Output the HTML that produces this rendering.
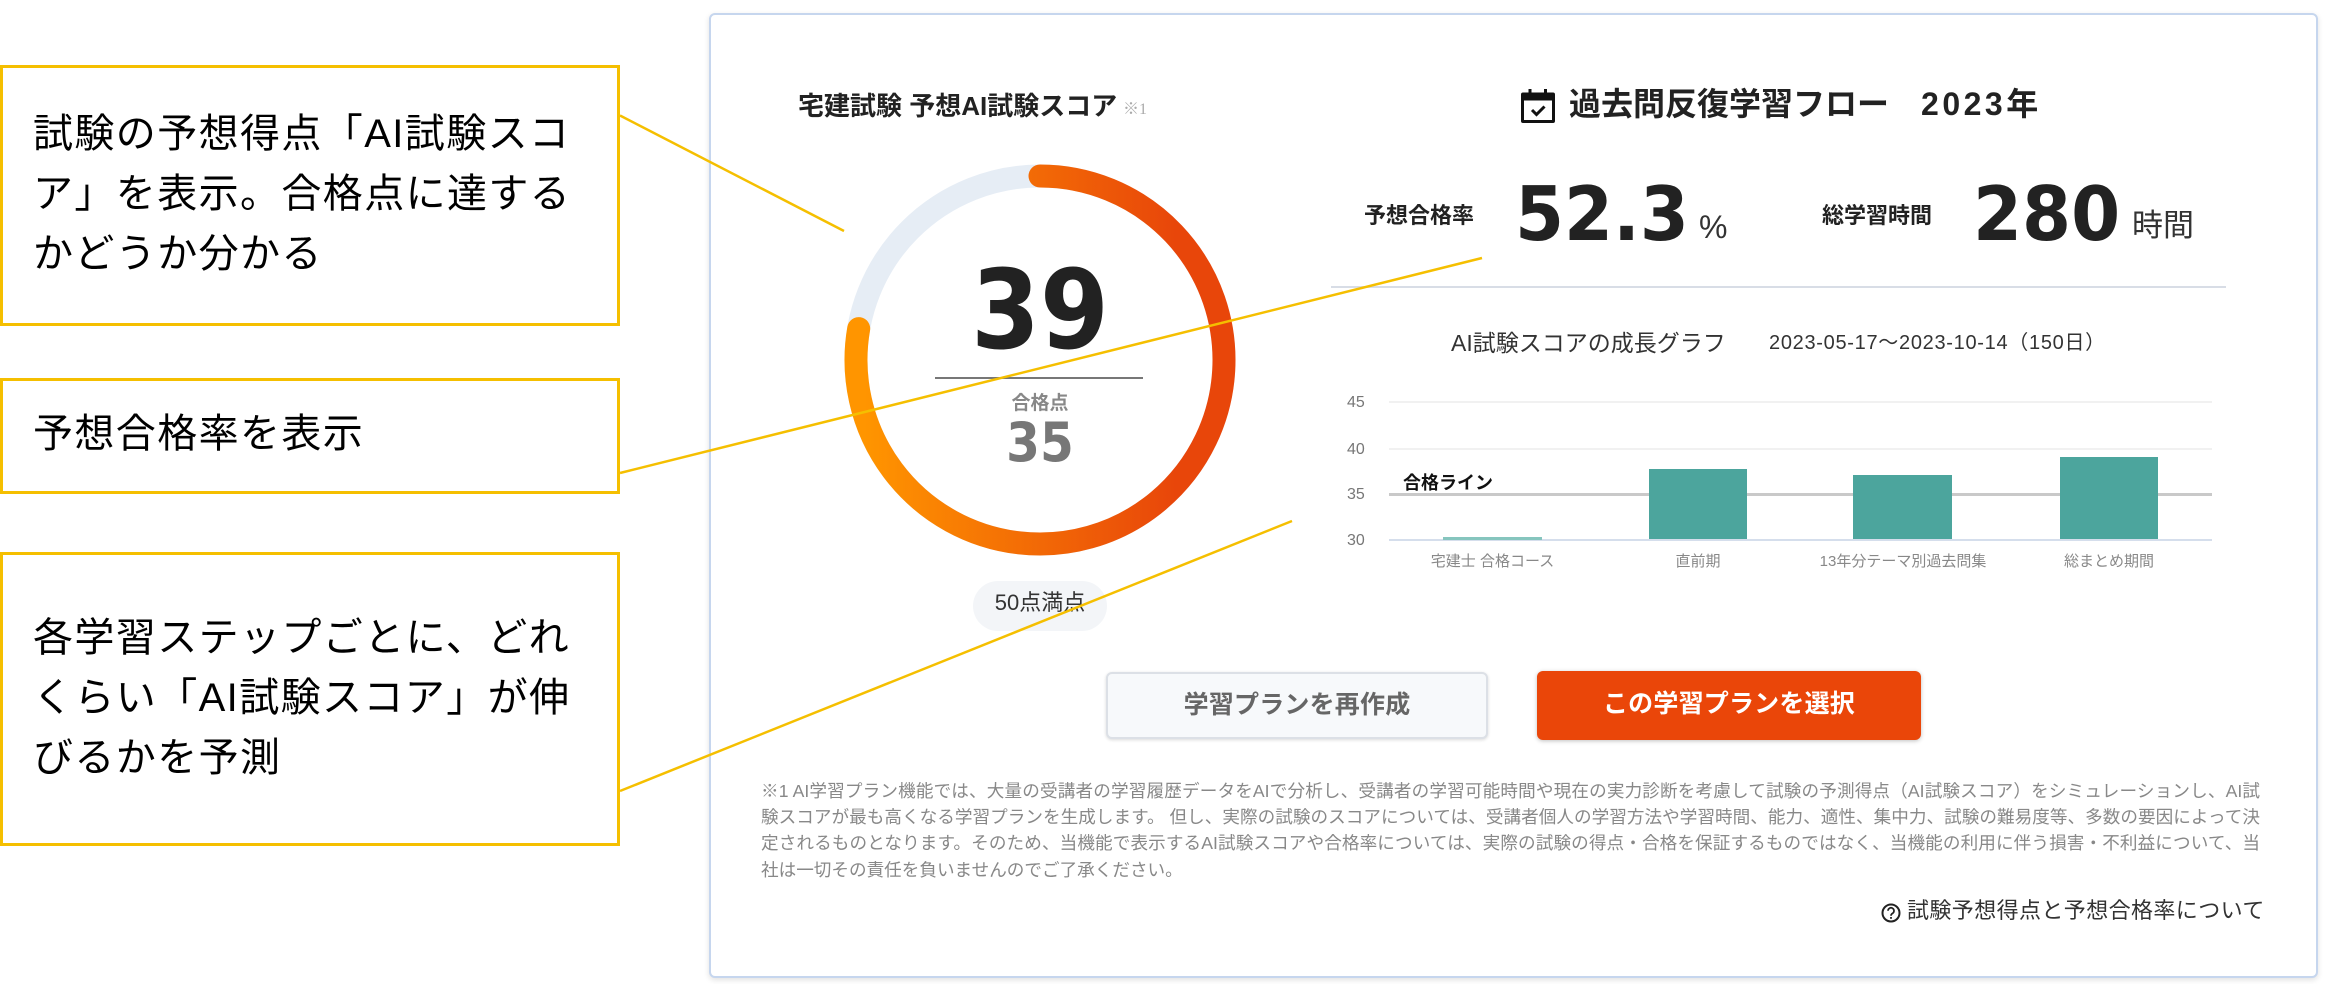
<!DOCTYPE html>
<html lang="ja">
<head>
<meta charset="utf-8">
<title>AI試験スコア</title>
<style>
html,body{margin:0;padding:0;background:#fff;width:2328px;height:984px;overflow:hidden}
body{position:relative;font-family:"Liberation Sans","Noto Sans CJK JP",sans-serif;color:#222}
.t{position:absolute;white-space:nowrap}
.c{text-align:center}
.box{position:absolute;left:0;width:614px;border:3px solid #F5BF00;background:#fff;box-sizing:content-box}
.cal{font-size:40px;color:#000;line-height:60px;left:33px;letter-spacing:1.4px}
.card{position:absolute;left:709px;top:13px;width:1605px;height:961px;border:2px solid #C6D6EE;border-radius:6px;background:#fff;box-shadow:0 2px 6px rgba(0,0,0,.12)}
.num{font-family:"DejaVu Sans",sans-serif;font-weight:700;color:#222;transform-origin:left top}
.b{font-weight:700}
.grid{position:absolute;left:1389px;width:823px;height:2px;background:#F1F1F1}
.bar{position:absolute;background:#4CA59D}
.xl{font-size:15px;color:#888;line-height:20px;top:552px}
.yl{font-size:16px;color:#777;line-height:20px;left:1347px}
.fn{position:absolute;left:761px;width:1499px;font-size:17.6px;line-height:26px;color:#888;text-align:justify;text-align-last:justify;white-space:nowrap}
.btn{position:absolute;box-sizing:border-box;border-radius:6px;text-align:center;font-size:25px;font-weight:700;letter-spacing:.2px}
</style>
</head>
<body>

<div class="card"></div>

<!-- Callout boxes -->
<div class="box" style="top:65px;height:255px"></div>
<div class="t cal" style="top:104px">試験の予想得点「AI試験スコ</div>
<div class="t cal" style="top:164px">ア」を表示。合格点に達する</div>
<div class="t cal" style="top:224px">かどうか分かる</div>

<div class="box" style="top:378px;height:110px"></div>
<div class="t cal" style="top:404px">予想合格率を表示</div>

<div class="box" style="top:552px;height:288px"></div>
<div class="t cal" style="top:608px">各学習ステップごとに、どれ</div>
<div class="t cal" style="top:668px">くらい「AI試験スコア」が伸</div>
<div class="t cal" style="top:728px">びるかを予測</div>

<!-- Score title -->
<div class="t b" style="left:798px;top:88px;font-size:26px;line-height:36px;color:#222">宅建試験 予想AI試験スコア</div>
<div class="t" style="left:1123px;top:100px;font-size:16px;line-height:20px;color:#aaa;font-family:'Liberation Serif','Noto Serif CJK SC',serif">※1</div>

<!-- Donut -->
<svg style="position:absolute;left:0;top:0" width="2328" height="984" viewBox="0 0 2328 984">
  <defs>
    <linearGradient id="g" gradientUnits="userSpaceOnUse" x1="845" y1="0" x2="1235" y2="0">
      <stop offset="0.05" stop-color="#FF9500"/>
      <stop offset="0.85" stop-color="#E8460A"/>
    </linearGradient>
  </defs>
  <circle cx="1040" cy="360" r="184" fill="none" stroke="#E6EDF5" stroke-width="23"/>
  <path d="M1040 176 A184 184 0 1 1 858.7 328.6 " fill="none" stroke="url(#g)" stroke-width="23" stroke-linecap="round"/>
  <rect x="935" y="377" width="208" height="2" fill="#777"/>
</svg>

<div class="t num c" style="left:940px;width:200px;top:245px;font-size:110px;line-height:130px;transform:scaleX(.9);transform-origin:center top">39</div>
<div class="t c b" style="left:990px;width:100px;top:392px;font-size:19px;line-height:24px;color:#888">合格点</div>
<div class="t c" style="left:990px;width:100px;top:411px;font-size:54px;line-height:64px;color:#777;font-family:'DejaVu Sans',sans-serif;font-weight:700;transform:scaleX(.9)">35</div>

<div style="position:absolute;left:973px;top:581px;width:134px;height:50px;border-radius:25px;background:#F3F5F8"></div>
<div class="t c" style="left:973px;width:134px;top:587px;font-size:22px;line-height:32px;color:#333">50点満点</div>

<!-- Right title -->
<svg style="position:absolute;left:1521px;top:89px" width="34" height="34" viewBox="0 0 34 34">
  <rect x="7.5" y="0" width="3" height="6" fill="#111"/>
  <rect x="23" y="0" width="3" height="6" fill="#111"/>
  <path d="M2 3.500H32a2 2 0 0 1 2 2V32a2 2 0 0 1-2 2H2a2 2 0 0 1-2-2V5.500a2 2 0 0 1 2-2Z" fill="#111"/>
  <rect x="3" y="11.500" width="28" height="19.500" fill="#fff"/>
  <path d="M11 21l4.500 4.500L23.500 17.500" fill="none" stroke="#111" stroke-width="3"/>
</svg>
<div class="t b" style="left:1569px;top:80px;font-size:32px;line-height:48px;color:#222">過去問反復学習フロー　<span style="letter-spacing:3.5px">2023年</span></div>

<!-- Stats -->
<div class="t b" style="left:1364px;top:200px;font-size:22px;line-height:32px;color:#222">予想合格率</div>
<div class="t num" style="left:1515px;top:169px;font-size:75px;line-height:90px;transform:scaleX(.94)">52.3</div>
<div class="t" style="left:1699px;top:207px;font-size:32px;line-height:40px;color:#333">%</div>
<div class="t b" style="left:1822px;top:200px;font-size:22px;line-height:32px;color:#222">総学習時間</div>
<div class="t num" style="left:1973px;top:169px;font-size:75px;line-height:90px;transform:scaleX(.94)">280</div>
<div class="t" style="left:2132px;top:206px;font-size:31px;line-height:40px;color:#333">時間</div>
<div style="position:absolute;left:1331px;top:286px;width:895px;height:2px;background:#D8DDE6"></div>

<!-- Graph -->
<div class="t" style="left:1451px;top:325px;font-size:23px;line-height:36px;color:#333">AI試験スコアの成長グラフ</div>
<div class="t" style="left:1769px;top:328px;font-size:20px;line-height:30px;color:#333;letter-spacing:.7px">2023-05-17～2023-10-14（150日）</div>

<div class="yl t" style="top:393px">45</div>
<div class="yl t" style="top:440px">40</div>
<div class="yl t" style="top:485px">35</div>
<div class="yl t" style="top:531px">30</div>

<div class="grid" style="top:401px"></div>
<div class="grid" style="top:448px"></div>
<div class="grid" style="top:493px;height:3px;background:#C9C9C9"></div>
<div class="grid" style="top:539px;background:#D5DEEC"></div>

<div class="bar" style="left:1443px;top:537px;width:99px;height:3px;background:#86C5BE"></div>
<div class="bar" style="left:1649px;top:469px;width:98px;height:70px"></div>
<div class="bar" style="left:1853px;top:475px;width:99px;height:64px"></div>
<div class="bar" style="left:2060px;top:457px;width:98px;height:82px"></div>

<div class="t b" style="left:1403px;top:469px;font-size:18px;line-height:28px;color:#111">合格ライン</div>

<div class="t xl c" style="left:1400px;width:185px">宅建士 合格コース</div>
<div class="t xl c" style="left:1605px;width:186px">直前期</div>
<div class="t xl c" style="left:1810px;width:186px">13年分テーマ別過去問集</div>
<div class="t xl c" style="left:2016px;width:186px">総まとめ期間</div>

<!-- Buttons -->
<div class="btn" style="left:1106px;top:672px;width:382px;height:67px;background:#F7F9FB;border:2px solid #DCE0E6;color:#666;line-height:62px;box-shadow:0 1px 3px rgba(0,0,0,.15)">学習プランを再作成</div>
<div class="btn" style="left:1537px;top:671px;width:384px;height:69px;background:#EA4609;color:#fff;line-height:67px;box-shadow:0 1px 4px rgba(0,0,0,.25)">この学習プランを選択</div>

<!-- Footnote -->
<div class="fn" style="top:778px">※1 AI学習プラン機能では、大量の受講者の学習履歴データをAIで分析し、受講者の学習可能時間や現在の実力診断を考慮して試験の予測得点（AI試験スコア）をシミュレーションし、AI試</div>
<div class="fn" style="top:804px">験スコアが最も高くなる学習プランを生成します。 但し、実際の試験のスコアについては、受講者個人の学習方法や学習時間、能力、適性、集中力、試験の難易度等、多数の要因によって決</div>
<div class="fn" style="top:830px">定されるものとなります。そのため、当機能で表示するAI試験スコアや合格率については、実際の試験の得点・合格を保証するものではなく、当機能の利用に伴う損害・不利益について、当</div>
<div class="fn" style="top:857px;text-align-last:left">社は一切その責任を負いませんのでご了承ください。</div>

<!-- Help link -->
<svg style="position:absolute;left:1881px;top:903px" width="20" height="20" viewBox="0 0 20 20">
  <circle cx="10" cy="10" r="8.500" fill="none" stroke="#222" stroke-width="2"/>
  <path d="M7 7.800a3 3 0 1 1 4.500 2.600c-1 .6-1.500 1.200-1.500 2.300" fill="none" stroke="#222" stroke-width="1.700"/>
  <rect x="9.100" y="14" width="1.800" height="1.800" fill="#222"/>
</svg>
<div class="t" style="left:1907px;top:895px;font-size:22px;line-height:32px;color:#333;letter-spacing:.4px">試験予想得点と予想合格率について</div>

<!-- Callout connector lines -->
<svg style="position:absolute;left:0;top:0;pointer-events:none" width="2328" height="984" viewBox="0 0 2328 984">
  <g stroke="#F5BF00" stroke-width="2.500" fill="none">
    <line x1="620" y1="115.500" x2="844" y2="231"/>
    <line x1="620" y1="473" x2="1482" y2="258"/>
    <line x1="620" y1="791" x2="1292" y2="521"/>
  </g>
</svg>

</body>
</html>
